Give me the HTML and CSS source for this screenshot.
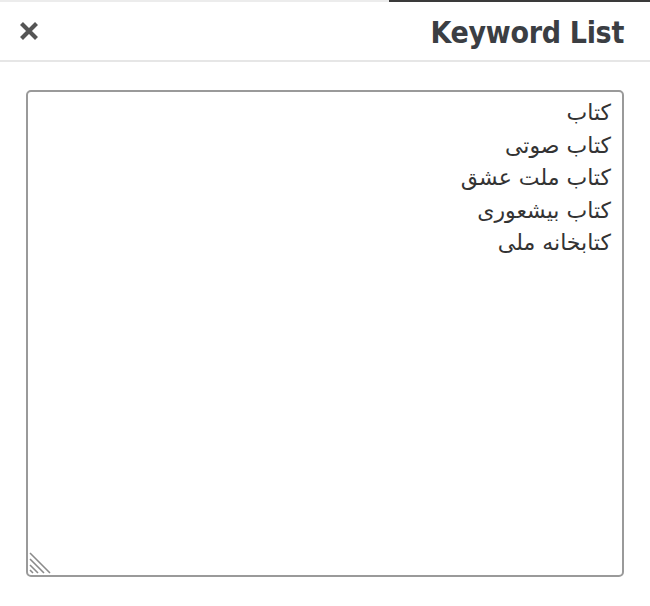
FILE: index.html
```html
<!DOCTYPE html>
<html lang="fa">
<head>
<meta charset="utf-8">
<link rel="stylesheet" href="styles.css">
</head>
<body>
<div class="topline"><span class="topline-light"></span><span class="topline-dark"></span></div>
<div class="modal-header">
  <button class="close" aria-label="Close">
    <svg width="20" height="20" viewBox="0 0 20 20"><path d="M2.5 2.5 L17.5 17.5 M17.5 2.5 L2.5 17.5" stroke="#555" stroke-width="4.2"/></svg>
  </button>
  <h2 class="title">Keyword List</h2>
</div>
<div class="modal-body">
  <div class="field">
    <textarea class="keywords" dir="rtl">کتاب
کتاب صوتی
کتاب ملت عشق
کتاب بیشعوری
کتابخانه ملی</textarea>
    <svg class="grip" width="26" height="26" viewBox="0 0 26 26"><path d="M2 4 L22 24 M2 10 L16 24 M2 16 L10 24 M2 21 L5 24" stroke="#8a8a8a" stroke-width="1.6"/></svg>
  </div>
</div>
</body>
</html>
```
FILE: styles.css
```css
html, body {
  margin: 0;
  padding: 0;
  background: #fff;
  width: 650px;
  height: 606px;
  overflow: hidden;
}
.topline {
  display: flex;
  height: 2px;
}
.topline-light {
  width: 389px;
  background: #ececec;
}
.topline-dark {
  flex: 1;
  background: #3a3a3a;
}
.modal-header {
  display: flex;
  align-items: center;
  justify-content: space-between;
  height: 58px;
  padding: 0 26px 0 19px;
  border-bottom: 2px solid #e6e6e6;
}
.close {
  border: 0;
  background: none;
  padding: 0;
  width: 20px;
  height: 20px;
  display: flex;
  align-items: center;
  justify-content: center;
  cursor: pointer;
}
.title {
  margin: 0;
  font-family: "DejaVu Sans Condensed", "DejaVu Sans", sans-serif;
  font-weight: bold;
  font-size: 30px;
  color: #3b3e43;
  letter-spacing: -0.3px;
  line-height: 1;
  padding-top: 4px;
}
.modal-body {
  padding: 28px 26px 0 26px;
}
.field {
  position: relative;
  width: 598px;
}
.keywords {
  display: block;
  box-sizing: border-box;
  width: 598px;
  height: 487px;
  margin: 0;
  padding: 5px 11px;
  border: 2px solid #9a9a9a;
  border-radius: 5px;
  font-family: "DejaVu Sans", sans-serif;
  font-size: 22px;
  line-height: 32.5px;
  color: #333;
  background: #fff;
  outline: none;
  resize: none;
}
.grip {
  position: absolute;
  left: 2px;
  bottom: 2px;
}
```
